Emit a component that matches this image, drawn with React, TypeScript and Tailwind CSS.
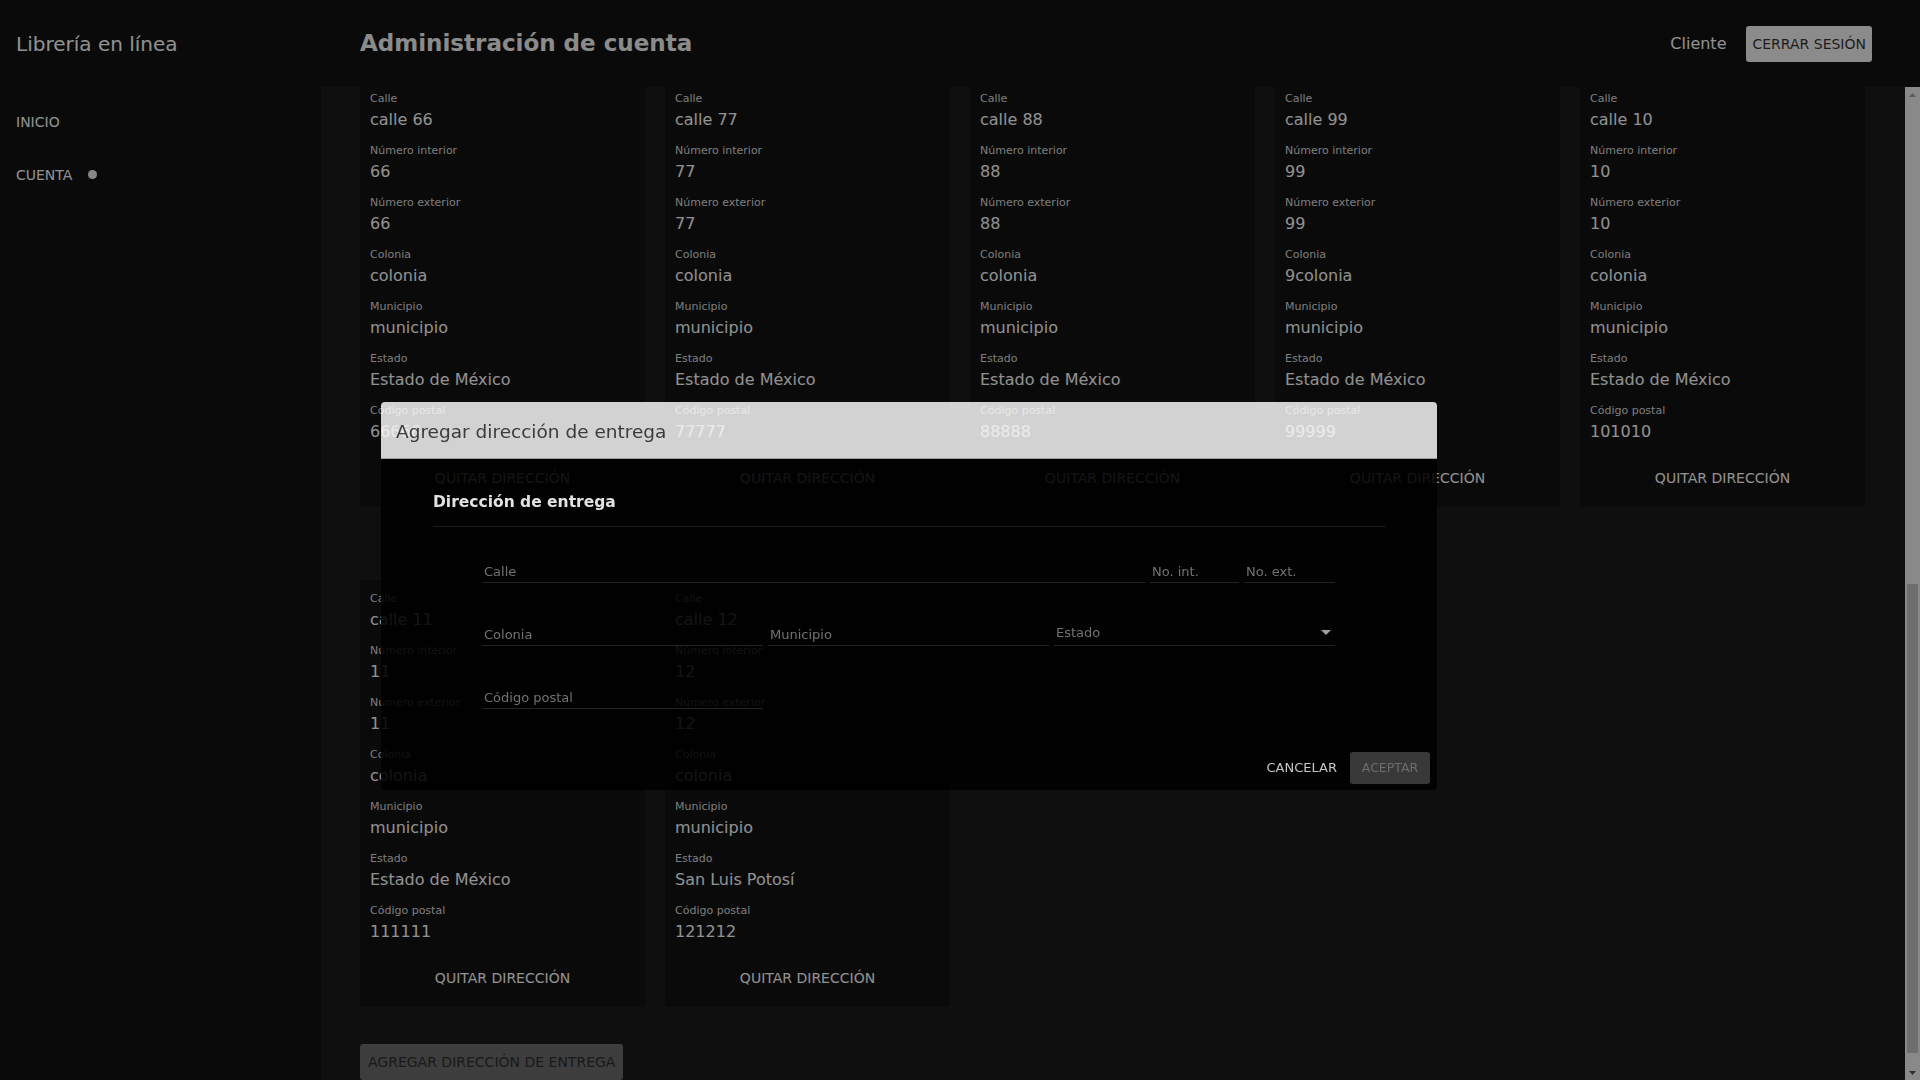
import { useLayoutEffect, useRef } from 'react'

type Address = {
  calle: string
  interior: string
  exterior: string
  colonia: string
  municipio: string
  estado: string
  cp: string
}

const mk = (n: string, estado: string, colonia: string, cp: string): Address => ({
  calle: `calle ${n}`,
  interior: n,
  exterior: n,
  colonia,
  municipio: 'municipio',
  estado,
  cp,
})

const ADDRESSES: Address[] = [
  mk('1', 'Jalisco', 'colonia', '11111'),
  mk('22', 'Estado de México', 'colonia', '22222'),
  mk('33', 'Puebla', 'colonia', '33333'),
  mk('44', 'Estado de México', 'colonia', '44444'),
  mk('55', 'Estado de México', 'colonia', '55555'),
  mk('66', 'Estado de México', 'colonia', '66666'),
  mk('77', 'Estado de México', 'colonia', '77777'),
  mk('88', 'Estado de México', 'colonia', '88888'),
  mk('99', 'Estado de México', '9colonia', '99999'),
  mk('10', 'Estado de México', 'colonia', '101010'),
  mk('11', 'Estado de México', 'colonia', '111111'),
  mk('12', 'San Luis Potosí', 'colonia', '121212'),
]

function AddressCard({ a }: { a: Address }) {
  const fields: [string, string][] = [
    ['Calle', a.calle],
    ['Número interior', a.interior],
    ['Número exterior', a.exterior],
    ['Colonia', a.colonia],
    ['Municipio', a.municipio],
    ['Estado', a.estado],
    ['Código postal', a.cp],
  ]
  return (
    <div className="flex h-[427px] flex-col bg-[#121212] pt-[11px] pb-[10px]">
      <div className="flex flex-col gap-[11px] px-[10px]">
        {fields.map(([label, value]) => (
          <div key={label}>
            <p className="text-[11px] leading-4 text-[#dcdcdc]">{label}</p>
            <p className="mt-[1px] text-base leading-6 text-white">{value}</p>
          </div>
        ))}
      </div>
      <button
        type="button"
        className="mt-[16px] h-9 w-full text-sm uppercase text-white"
      >
        Quitar dirección
      </button>
    </div>
  )
}

function Field({ label, className }: { label: string; className: string }) {
  return (
    <div className={`h-[21px] border-b border-[#232323] ${className}`}>
      <p className="pl-[2px] text-[13px] leading-5 text-[#727272]">{label}</p>
    </div>
  )
}

function AddressDialog() {
  return (
    <div className="fixed top-[402px] left-[381px] z-20 w-[1056px] font-['DejaVu_Sans',sans-serif]">
      <div className="flex h-[57px] items-center rounded-t-[4px] border-b border-[#9c9c9c] bg-[rgba(255,255,255,0.82)] px-[15px] pt-[3px]">
        <h2 className="text-[18.5px] text-[#3b3b3b]">Agregar dirección de entrega</h2>
      </div>
      <div className="rounded-b-[4px] bg-[rgba(0,0,0,0.87)] pt-[31px] pb-[6px]">
        <div className="px-[52px]">
          <h3 className="text-[15.5px] leading-6 font-bold text-[#e2e2e2]">
            Dirección de entrega
          </h3>
          <div className="mt-3 h-px bg-[#1d1d1d]" />
        </div>

        <div className="mt-[35px] ml-[101px] flex w-[853px] flex-col gap-[42px]">
          <div className="flex gap-[5px]">
            <Field label="Calle" className="w-[663px]" />
            <Field label="No. int." className="w-[89px]" />
            <Field label="No. ext." className="w-[91px]" />
          </div>
          <div className="flex gap-[5px]">
            <Field label="Colonia" className="w-[281px]" />
            <Field label="Municipio" className="w-[281px]" />
            <div className="flex h-[21px] w-[281px] items-start justify-between border-b border-[#232323]">
              <p className="pl-[2px] text-[13px] leading-[15px] text-[#727272]">Estado</p>
              <svg width="10" height="5" viewBox="0 0 10 5" className="mt-[5px] mr-[4px]">
                <path d="M0 0h10L5 5z" fill="#a0a0a0" />
              </svg>
            </div>
          </div>
          <div className="flex">
            <Field label="Código postal" className="w-[281px]" />
          </div>
        </div>

        <div className="mt-[43px] flex items-center justify-end gap-[5px] pr-[7px]">
          <button type="button" className="h-8 px-2 text-[13px] text-[#c6c6c6]">
            CANCELAR
          </button>
          <button
            type="button"
            className="h-8 w-[80px] rounded-[3px] bg-[#393939] text-[12.5px] text-[#6c6c6c]"
          >
            ACEPTAR
          </button>
        </div>
      </div>
    </div>
  )
}

function ScrollBar() {
  return (
    <div className="flex w-[15px] shrink-0 flex-col bg-[#f1f1f1]">
      <div className="flex h-[15px] items-center justify-center">
        <svg width="7" height="4" viewBox="0 0 7 4">
          <path d="M0 4h7L3.5 0z" fill="#a3a3a3" />
        </svg>
      </div>
      <div className="flex-1 px-[2px]">
        <div className="mt-[482px] h-[469px] bg-[#c1c1c1]" />
      </div>
      <div className="flex h-[15px] items-center justify-center">
        <svg width="7" height="4" viewBox="0 0 7 4">
          <path d="M0 0h7L3.5 4z" fill="#505050" />
        </svg>
      </div>
    </div>
  )
}

export default function App() {
  const scrollRef = useRef<HTMLDivElement>(null)

  useLayoutEffect(() => {
    if (scrollRef.current) scrollRef.current.scrollTop = 1020
  }, [])

  return (
    <div className="flex h-screen flex-col overflow-hidden bg-[#121212] font-['DejaVu_Sans',sans-serif] text-white">
      <header className="flex h-[87px] shrink-0 items-center bg-[#121212]">
        <div className="w-[321px] shrink-0 pl-4 text-[20px]">Librería en línea</div>
        <h1 className="ml-[39px] text-[23px] font-bold text-[#f4f4f4]">
          Administración de cuenta
        </h1>
        <div className="ml-auto flex items-center gap-[20px] pr-12">
          <span className="text-base">Cliente</span>
          <button
            type="button"
            className="h-9 rounded-[3px] bg-[#f5f5f5] px-1.5 text-sm text-[#363636]"
          >
            CERRAR SESIÓN
          </button>
        </div>
      </header>

      <div className="flex min-h-0 flex-1">
        <nav className="w-[321px] shrink-0 bg-[#121212] pt-[8px] pl-4 text-sm">
          <div className="flex h-[53px] items-center">INICIO</div>
          <div className="flex h-[53px] items-center gap-[16px]">
            CUENTA
            <span className="h-[9px] w-[9px] rounded-full bg-[#f0f0f0]" />
          </div>
        </nav>

        <main
          ref={scrollRef}
          className="flex-1 overflow-hidden bg-[#1b1b1b] pt-[13px] pr-[40px] pb-[26px] pl-[39px]"
        >
          <section className="mb-[73px] h-[427px] bg-[#121212] p-[10px]">
            <p className="text-[11px] leading-4 text-[#dcdcdc]">Nombre</p>
            <p className="mt-0.5 text-base leading-6">Cliente</p>
            <p className="mt-[10px] text-[11px] leading-4 text-[#dcdcdc]">Correo electrónico</p>
            <p className="mt-0.5 text-base leading-6">cliente@correo.com</p>
          </section>

          <div className="grid grid-cols-5 gap-x-[20px] gap-y-[73px]">
            {ADDRESSES.map((a, i) => (
              <AddressCard key={i} a={a} />
            ))}
          </div>

          <button
            type="button"
            className="mt-[37px] h-9 rounded-[3px] bg-[#6c6c6c] px-2 text-sm text-[#2e2e2e]"
          >
            AGREGAR DIRECCIÓN DE ENTREGA
          </button>
        </main>

        <ScrollBar />
      </div>

      <div className="fixed inset-0 z-10 bg-black/[0.43]" />
      <AddressDialog />
    </div>
  )
}
